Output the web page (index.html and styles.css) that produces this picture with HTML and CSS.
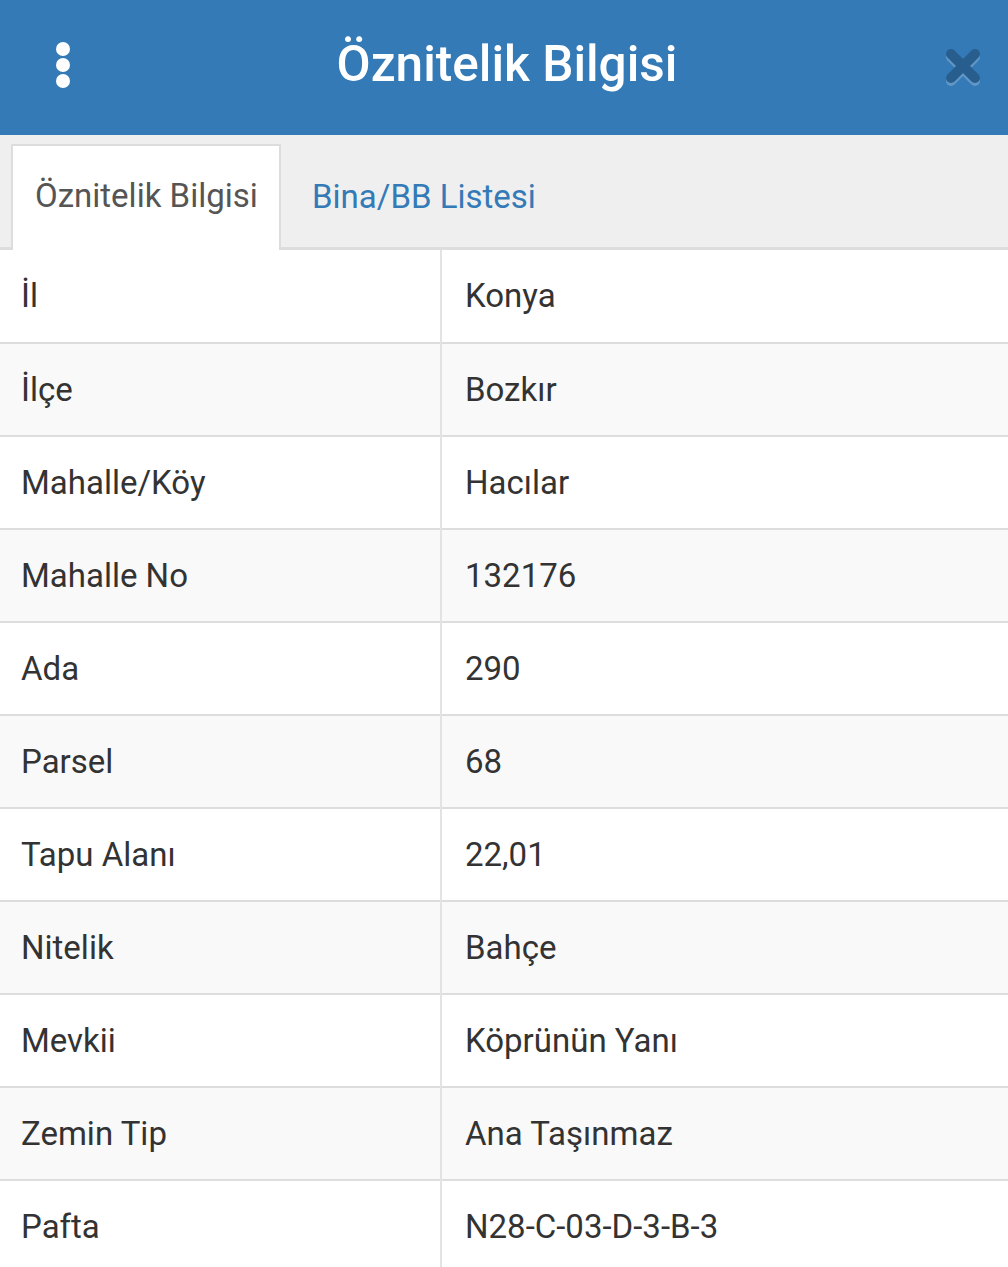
FILE: index.html
```html
<!DOCTYPE html>
<html lang="tr">
<head>
<meta charset="utf-8">
<title>Öznitelik Bilgisi</title>
<link rel="stylesheet" href="styles.css">
</head>
<body>
<div class="panel">
  <header class="topbar">
    <button class="menu-btn" aria-label="Menü">
      <svg width="16" height="48" viewBox="0 0 16 48"><circle cx="8" cy="8" r="7" fill="#fff"/><circle cx="8" cy="24" r="7" fill="#fff"/><circle cx="8" cy="40" r="7" fill="#fff"/></svg>
    </button>
    <h1 class="title">Öznitelik Bilgisi</h1>
    <button class="close-btn" aria-label="Kapat">
      <svg width="40" height="42" viewBox="0 0 40 42">
        <g opacity="0.22">
          <g transform="translate(0,3)" stroke="#fff" stroke-width="10" stroke-linecap="round"><line x1="8" y1="8" x2="32" y2="32"/><line x1="32" y1="8" x2="8" y2="32"/></g>
          <g stroke="#000" stroke-width="10" stroke-linecap="round"><line x1="8" y1="8" x2="32" y2="32"/><line x1="32" y1="8" x2="8" y2="32"/></g>
        </g>
      </svg>
    </button>
  </header>
  <nav class="tabs">
    <div class="tab active">Öznitelik Bilgisi</div>
    <div class="tab">Bina/BB Listesi</div>
  </nav>
  <table class="attrs">
    <tbody>
      <tr><td class="key">İl</td><td>Konya</td></tr>
      <tr><td class="key">İlçe</td><td>Bozkır</td></tr>
      <tr><td class="key">Mahalle/Köy</td><td>Hacılar</td></tr>
      <tr><td class="key">Mahalle No</td><td>132176</td></tr>
      <tr><td class="key">Ada</td><td>290</td></tr>
      <tr><td class="key">Parsel</td><td>68</td></tr>
      <tr><td class="key">Tapu Alanı</td><td>22,01</td></tr>
      <tr><td class="key">Nitelik</td><td>Bahçe</td></tr>
      <tr><td class="key">Mevkii</td><td>Köprünün Yanı</td></tr>
      <tr><td class="key">Zemin Tip</td><td>Ana Taşınmaz</td></tr>
      <tr><td class="key">Pafta</td><td>N28-C-03-D-3-B-3</td></tr>
    </tbody>
  </table>
</div>
</body>
</html>
```
FILE: styles.css
```css
* { box-sizing: border-box; }
html, body { margin: 0; padding: 0; background: #fff; }
body { font-family: Roboto, "Noto Sans", Arial, sans-serif; color: #333; overflow: hidden; }

.panel { width: 1008px; }

.topbar {
  height: 135px;
  background: #337ab7;
  display: flex;
  align-items: center;
  justify-content: space-between;
  padding: 0 25px 0 55px;
}
.menu-btn, .close-btn {
  background: none;
  border: 0;
  padding: 0;
  display: flex;
  cursor: pointer;
}
.menu-btn { margin-top: -6px; }
.close-btn { margin-top: -2px; }
.title {
  margin: 0 0 6px 0;
  color: #fff;
  font-weight: 500;
  font-size: 49.5px;
  line-height: 1;
}

.tabs {
  height: 115px;
  background: #efefef;
  border-bottom: 3px solid #dddddd;
  display: flex;
  align-items: flex-end;
  padding-left: 11px;
}
.tab {
  height: 103px;
  margin-bottom: -3px;
  padding: 0 20px 6px 22px;
  display: flex;
  align-items: center;
  font-size: 33px;
  white-space: nowrap;
  color: #337ab7;
  border: 2px solid transparent;
  border-bottom: 0;
}
.tab.active {
  background: #fff;
  color: #555;
  border-color: #dddddd;
  width: 270px;
  height: 106px;
}
.tab + .tab { padding-left: 29px; }

.attrs {
  width: 100%;
  border-collapse: collapse;
  table-layout: fixed;
}
.attrs td {
  font-size: 33px;
  line-height: 37px;
  padding: 26.9px 22px 27.1px 23px;
  border-top: 2px solid #dddddd;
  color: #333;
  white-space: nowrap;
}
.attrs tr:first-child td { border-top: 0; padding-top: 27px; padding-bottom: 28px; }
.attrs td.key {
  width: 441px;
  padding-left: 21px;
  border-right: 2px solid #e3e3e3;
}
.attrs tr:nth-child(even) td { background: #f9f9f9; }
```
